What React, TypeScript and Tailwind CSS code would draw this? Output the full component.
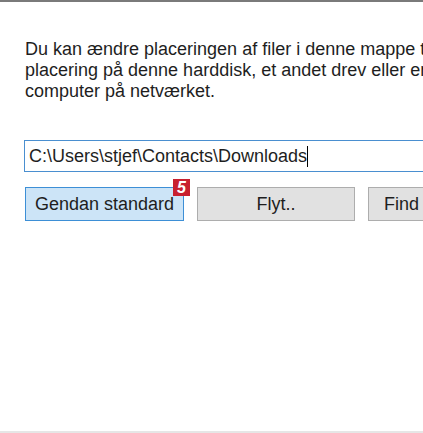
export default function App() {
    return (
        <div
            className="relative w-[423px] h-[433px] overflow-hidden bg-white border-t-2 border-b-2 border-t-[#7a7a7a] border-b-[#e6e6e6]"
            style={{ fontFamily: '"Liberation Sans", Arial, sans-serif' }}
        >
            <div className="pl-[25px] pt-[37px] text-[18px] leading-[21px] text-[#1e1e1e] whitespace-nowrap">
                <p>Du kan ændre placeringen af filer i denne mappe til en anden</p>
                <p>placering på denne harddisk, et andet drev eller en anden</p>
                <p>computer på netværket.</p>
            </div>

            <div className="ml-[24px] mt-[38px] h-[32px] w-[420px] shrink-0 border border-[#4a8fd0] bg-white flex items-center pl-[4px] text-[18px] text-[#1e1e1e] whitespace-nowrap">
                <span>C:\Users\stjef\Contacts\Downloads</span>
                <span className="w-px h-[21px] bg-black" />
            </div>

            <div className="ml-[25px] mt-[15px] flex gap-[13px] text-[18px] text-[#1e1e1e] whitespace-nowrap">
                <div className="relative shrink-0">
                    <button className="w-[159px] h-[34px] border border-[#3d8fd6] bg-[#cce4f7]">
                        Gendan standard
                    </button>
                    <span className="absolute left-[148px] -top-[8px] w-[17px] h-[17px] bg-[#c8202f] text-white text-[16px] font-bold italic leading-[17px] text-center">
                        5
                    </span>
                </div>
                <button className="shrink-0 w-[158px] h-[34px] border border-[#adadad] bg-[#e1e1e1]">
                    Flyt..
                </button>
                <button className="shrink-0 w-[100px] h-[34px] border border-[#adadad] bg-[#e1e1e1] text-left pl-[15px]">
                    Find
                </button>
            </div>
        </div>
    )
}
